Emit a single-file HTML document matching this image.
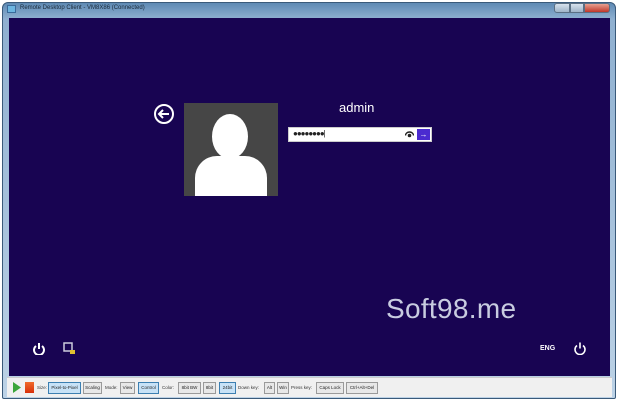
<!DOCTYPE html>
<html><head><meta charset="utf-8"><style>
*{margin:0;padding:0;box-sizing:border-box}
body{width:620px;height:403px;background:#fff;position:relative;overflow:hidden;font-family:"Liberation Sans",sans-serif}
.frame{position:absolute;left:2px;top:2px;width:614px;height:397px;background:linear-gradient(#5f8ab4,#8fb0d0 16px,#bcd2e6);border:1px solid #3a5a7a;border-radius:6px 6px 2px 2px}
.title{position:absolute;left:20px;top:5px;font-size:6px;color:#1a2a3a}
.ticon{position:absolute;left:7px;top:5px;width:9px;height:8px;background:#6cb5e0;border:1px solid #3a6a9a}
.btns{position:absolute;right:10px;top:3px;display:flex}
.btns div{height:10px;border:1px solid #5a6f84;background:linear-gradient(#d6e2ee,#9fb4c8)}
.screen{position:absolute;left:9px;top:18px;width:601px;height:358px;background:#180452}
.tb{position:absolute;left:7px;top:377px;width:605px;height:20px;background:#f0f0f0;border-top:1px solid #ccc}
.b{position:absolute;top:4px;height:12px;font-size:4.5px;line-height:10px;text-align:center;overflow:hidden;white-space:nowrap;border:1px solid #9a9a9a;background:#e8e8e8;color:#222}
.b.s{border-color:#3c7fb1;background:#c7e2f7}
.l{position:absolute;top:7px;font-size:4.5px;color:#333;white-space:nowrap}
</style></head><body>
<div class="frame"></div>
<div class="ticon"></div>
<div class="title">Remote Desktop Client - VM8X86 (Connected)</div>
<div class="btns"><div style="width:16px;border-radius:3px 0 0 3px"></div><div style="width:14px"></div><div style="width:26px;background:linear-gradient(#e8a090,#c0392b);border-radius:0 3px 3px 0"></div></div>
<div class="screen">
  <svg style="position:absolute;left:144px;top:85px" width="22" height="22" viewBox="0 0 22 22"><circle cx="11" cy="11" r="9" fill="none" stroke="#fff" stroke-width="2"/><path d="M16 11H6M10 7l-4 4 4 4" fill="none" stroke="#fff" stroke-width="2"/></svg>
  <div style="position:absolute;left:175px;top:85px;width:94px;height:93px;background:#464646;overflow:hidden">
    <div style="position:absolute;left:28px;top:11px;width:36px;height:45px;border-radius:50%;background:#fff"></div>
    <div style="position:absolute;left:11px;top:53px;width:72px;height:50px;border-radius:22px 22px 0 0;background:#fff"></div>
  </div>
  <div style="position:absolute;left:330px;top:82px;color:#fff;font-size:13px">admin</div>
  <div style="position:absolute;left:279px;top:109px;width:144px;height:15px;background:#fff;border:1px solid #ccc">
    <span style="position:absolute;left:4px;top:1px;font-size:8px;letter-spacing:-1px;color:#222">●●●●●●●●|</span>
    <svg style="position:absolute;right:17px;top:3px" width="9" height="7" viewBox="0 0 9 7"><path d="M0.5 4.5a4 3.5 0 0 1 8 0" fill="none" stroke="#222" stroke-width="1.4"/><circle cx="4.5" cy="4.5" r="1.8" fill="#222"/></svg>
    <div style="position:absolute;right:1px;top:1px;width:13px;height:11px;background:#4b2bd0;color:#fff;font-size:8px;text-align:center;line-height:11px">→</div>
  </div>
  <div style="position:absolute;left:377px;top:275px;color:#c8cce0;font-size:28px;letter-spacing:0.3px">Soft98.me</div>
  <svg style="position:absolute;left:23px;top:323px" width="14" height="14" viewBox="0 0 14 14"><path d="M4 5a5 5 0 1 0 6 0M7 2v6" fill="none" stroke="#fff" stroke-width="2"/></svg>
  <svg style="position:absolute;left:53px;top:323px" width="14" height="14" viewBox="0 0 14 14"><rect x="2" y="2" width="8" height="8" fill="none" stroke="#ccd" stroke-width="1.5"/><rect x="8" y="9" width="5" height="4" fill="#e0c030"/></svg>
  <div style="position:absolute;left:531px;top:327px;color:#fff;font-size:7px;font-weight:bold">ENG</div>
  <svg style="position:absolute;left:564px;top:323px" width="14" height="14" viewBox="0 0 14 14"><path d="M4 4.5a5 5 0 1 0 6 0M7 1.5v6" fill="none" stroke="#fff" stroke-width="1.6"/></svg>
</div>
<div class="tb">
  <svg style="position:absolute;left:5px;top:4px" width="10" height="11"><path d="M1 0L9 5.5 1 11z" fill="#3aa53a"/></svg>
  <div style="position:absolute;left:18px;top:4px;width:9px;height:11px;background:linear-gradient(#f06a2a,#d8300a)"></div>
  <span class="l" style="left:30px">Size:</span>
  <div class="b s" style="left:41px;width:33px">Pixel-to-Pixel</div>
  <div class="b" style="left:76px;width:19px">Scaling</div>
  <span class="l" style="left:98px">Mode:</span>
  <div class="b" style="left:113px;width:15px">View</div>
  <div class="b s" style="left:131px;width:21px">Control</div>
  <span class="l" style="left:155px">Color:</span>
  <div class="b" style="left:171px;width:23px">8bit BW</div>
  <div class="b" style="left:196px;width:13px">8bit</div>
  <div class="b s" style="left:212px;width:17px">24bit</div>
  <span class="l" style="left:231px">Down key:</span>
  <div class="b" style="left:257px;width:11px">Alt</div>
  <div class="b" style="left:270px;width:12px">Win</div>
  <span class="l" style="left:284px">Press key:</span>
  <div class="b" style="left:309px;width:28px">Caps Lock</div>
  <div class="b" style="left:339px;width:32px">Ctrl+Alt+Del</div>
</div>
</body></html>
